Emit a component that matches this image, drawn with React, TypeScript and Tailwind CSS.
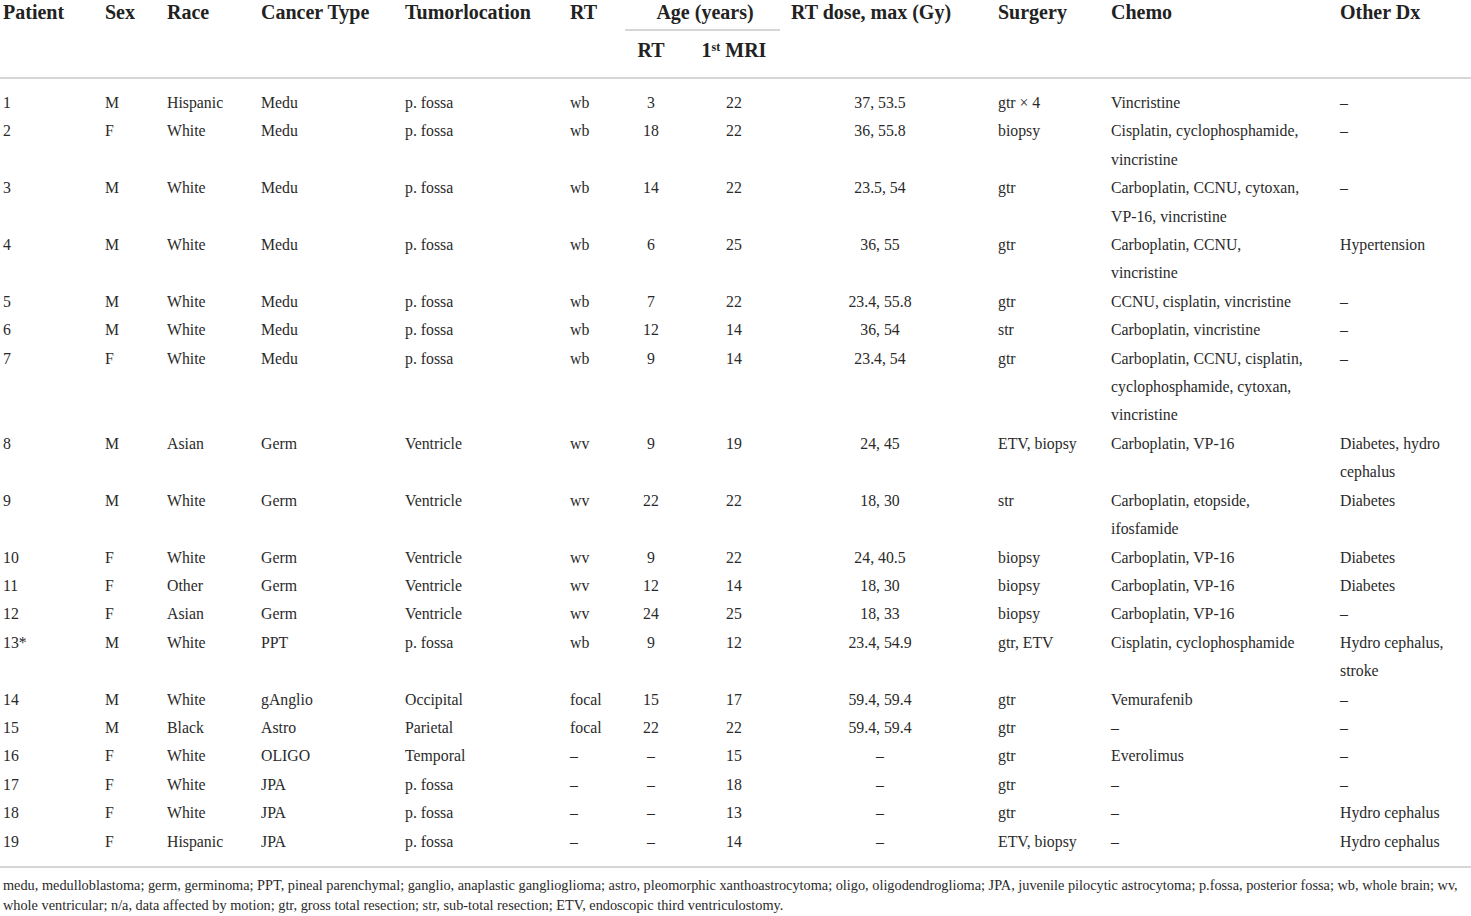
import React from "react";

type Row = {
  p: string; sex: string; race: string; cancer: string; loc: string; rt: string;
  ageRt: string; mri: string; dose: string; surgery: string; chemo: string[]; other: string[];
};

const rows: Row[] = [
  { p: "1", sex: "M", race: "Hispanic", cancer: "Medu", loc: "p. fossa", rt: "wb", ageRt: "3", mri: "22", dose: "37, 53.5", surgery: "gtr × 4", chemo: ["Vincristine"], other: ["–"] },
  { p: "2", sex: "F", race: "White", cancer: "Medu", loc: "p. fossa", rt: "wb", ageRt: "18", mri: "22", dose: "36, 55.8", surgery: "biopsy", chemo: ["Cisplatin, cyclophosphamide,", "vincristine"], other: ["–"] },
  { p: "3", sex: "M", race: "White", cancer: "Medu", loc: "p. fossa", rt: "wb", ageRt: "14", mri: "22", dose: "23.5, 54", surgery: "gtr", chemo: ["Carboplatin, CCNU, cytoxan,", "VP-16, vincristine"], other: ["–"] },
  { p: "4", sex: "M", race: "White", cancer: "Medu", loc: "p. fossa", rt: "wb", ageRt: "6", mri: "25", dose: "36, 55", surgery: "gtr", chemo: ["Carboplatin, CCNU,", "vincristine"], other: ["Hypertension"] },
  { p: "5", sex: "M", race: "White", cancer: "Medu", loc: "p. fossa", rt: "wb", ageRt: "7", mri: "22", dose: "23.4, 55.8", surgery: "gtr", chemo: ["CCNU, cisplatin, vincristine"], other: ["–"] },
  { p: "6", sex: "M", race: "White", cancer: "Medu", loc: "p. fossa", rt: "wb", ageRt: "12", mri: "14", dose: "36, 54", surgery: "str", chemo: ["Carboplatin, vincristine"], other: ["–"] },
  { p: "7", sex: "F", race: "White", cancer: "Medu", loc: "p. fossa", rt: "wb", ageRt: "9", mri: "14", dose: "23.4, 54", surgery: "gtr", chemo: ["Carboplatin, CCNU, cisplatin,", "cyclophosphamide, cytoxan,", "vincristine"], other: ["–"] },
  { p: "8", sex: "M", race: "Asian", cancer: "Germ", loc: "Ventricle", rt: "wv", ageRt: "9", mri: "19", dose: "24, 45", surgery: "ETV, biopsy", chemo: ["Carboplatin, VP-16"], other: ["Diabetes, hydro", "cephalus"] },
  { p: "9", sex: "M", race: "White", cancer: "Germ", loc: "Ventricle", rt: "wv", ageRt: "22", mri: "22", dose: "18, 30", surgery: "str", chemo: ["Carboplatin, etopside,", "ifosfamide"], other: ["Diabetes"] },
  { p: "10", sex: "F", race: "White", cancer: "Germ", loc: "Ventricle", rt: "wv", ageRt: "9", mri: "22", dose: "24, 40.5", surgery: "biopsy", chemo: ["Carboplatin, VP-16"], other: ["Diabetes"] },
  { p: "11", sex: "F", race: "Other", cancer: "Germ", loc: "Ventricle", rt: "wv", ageRt: "12", mri: "14", dose: "18, 30", surgery: "biopsy", chemo: ["Carboplatin, VP-16"], other: ["Diabetes"] },
  { p: "12", sex: "F", race: "Asian", cancer: "Germ", loc: "Ventricle", rt: "wv", ageRt: "24", mri: "25", dose: "18, 33", surgery: "biopsy", chemo: ["Carboplatin, VP-16"], other: ["–"] },
  { p: "13*", sex: "M", race: "White", cancer: "PPT", loc: "p. fossa", rt: "wb", ageRt: "9", mri: "12", dose: "23.4, 54.9", surgery: "gtr, ETV", chemo: ["Cisplatin, cyclophosphamide"], other: ["Hydro cephalus,", "stroke"] },
  { p: "14", sex: "M", race: "White", cancer: "gAnglio", loc: "Occipital", rt: "focal", ageRt: "15", mri: "17", dose: "59.4, 59.4", surgery: "gtr", chemo: ["Vemurafenib"], other: ["–"] },
  { p: "15", sex: "M", race: "Black", cancer: "Astro", loc: "Parietal", rt: "focal", ageRt: "22", mri: "22", dose: "59.4, 59.4", surgery: "gtr", chemo: ["–"], other: ["–"] },
  { p: "16", sex: "F", race: "White", cancer: "OLIGO", loc: "Temporal", rt: "–", ageRt: "–", mri: "15", dose: "–", surgery: "gtr", chemo: ["Everolimus"], other: ["–"] },
  { p: "17", sex: "F", race: "White", cancer: "JPA", loc: "p. fossa", rt: "–", ageRt: "–", mri: "18", dose: "–", surgery: "gtr", chemo: ["–"], other: ["–"] },
  { p: "18", sex: "F", race: "White", cancer: "JPA", loc: "p. fossa", rt: "–", ageRt: "–", mri: "13", dose: "–", surgery: "gtr", chemo: ["–"], other: ["Hydro cephalus"] },
  { p: "19", sex: "F", race: "Hispanic", cancer: "JPA", loc: "p. fossa", rt: "–", ageRt: "–", mri: "14", dose: "–", surgery: "ETV, biopsy", chemo: ["–"], other: ["Hydro cephalus"] },
];

function Lines({ lines }: { lines: string[] }) {
  return (
    <>
      {lines.map((l, i) => (
        <div key={i} className="whitespace-nowrap">{l}</div>
      ))}
    </>
  );
}

export default function App() {
  const th = "align-top text-left font-bold text-[20px] leading-[24px] text-[#222] border-b-2 border-[#d6d6d6] pl-[3px] whitespace-nowrap";
  return (
    <div className="w-[1471px] h-[916px] bg-white overflow-hidden" style={{ fontFamily: '"Liberation Serif", "Times New Roman", serif' }}>
      <table className="w-[1471px] table-fixed border-collapse">
        <colgroup>
          <col className="w-[102px]" />
          <col className="w-[62px]" />
          <col className="w-[94px]" />
          <col className="w-[144px]" />
          <col className="w-[165px]" />
          <col className="w-[55px]" />
          <col className="w-[58px]" />
          <col className="w-[108px]" />
          <col className="w-[184px]" />
          <col className="w-[136px]" />
          <col className="w-[229px]" />
          <col className="w-[134px]" />
        </colgroup>
        <thead>
          <tr>
            <th rowSpan={2} className={th}>Patient</th>
            <th rowSpan={2} className={th}>Sex</th>
            <th rowSpan={2} className={th}>Race</th>
            <th rowSpan={2} className={th}>Cancer Type</th>
            <th rowSpan={2} className={th}>Tumorlocation</th>
            <th rowSpan={2} className={th}>RT</th>
            <th colSpan={2} className="align-top p-0 font-bold text-[20px] leading-[24px] text-[#222]">
              <div className="text-center">Age (years)</div>
              <div className="ml-[3px] mr-[8px] mt-[5px] border-b-2 border-[#d6d6d6]" />
            </th>
            <th rowSpan={2} className={th + " text-center pl-0"}>RT dose, max (Gy)</th>
            <th rowSpan={2} className={th + " pl-[26px]"}>Surgery</th>
            <th rowSpan={2} className={th}>Chemo</th>
            <th rowSpan={2} className={th}>Other Dx</th>
          </tr>
          <tr>
            <th className="align-top text-center font-bold text-[20px] leading-[24px] text-[#222] border-b-2 border-[#d6d6d6] pt-[7px] pb-[15px]">RT</th>
            <th className="align-top text-center font-bold text-[20px] leading-[24px] text-[#222] border-b-2 border-[#d6d6d6] pt-[7px] pb-[15px] whitespace-nowrap">
              1<sup className="text-[12px] font-bold">st</sup> MRI
            </th>
          </tr>
        </thead>
        <tbody className="text-[15.8px] leading-[28.4px] text-[#2a2a2a]">
          {rows.map((r, i) => {
            const first = i === 0;
            const last = i === rows.length - 1;
            const pad = (first ? "pt-[10px] " : "") + (last ? "pb-[10px] border-b-2 border-[#d6d6d6] " : "");
            const l = "align-top text-left pl-[3px] whitespace-nowrap " + pad;
            const c = "align-top text-center whitespace-nowrap " + pad;
            return (
              <tr key={r.p}>
                <td className={l}>{r.p}</td>
                <td className={l}>{r.sex}</td>
                <td className={l}>{r.race}</td>
                <td className={l}>{r.cancer}</td>
                <td className={l}>{r.loc}</td>
                <td className={l}>{r.rt}</td>
                <td className={c}>{r.ageRt}</td>
                <td className={c}>{r.mri}</td>
                <td className={c}>{r.dose}</td>
                <td className={l + " pl-[26px]"}>{r.surgery}</td>
                <td className={l}><Lines lines={r.chemo} /></td>
                <td className={l}><Lines lines={r.other} /></td>
              </tr>
            );
          })}
        </tbody>
      </table>
      <div className="pl-[3px] pt-[7px] text-[14.3px] leading-[20px] text-[#2a2a2a]">
        <div className="whitespace-nowrap">medu, medulloblastoma; germ, germinoma; PPT, pineal parenchymal; ganglio, anaplastic ganglioglioma; astro, pleomorphic xanthoastrocytoma; oligo, oligodendroglioma; JPA, juvenile pilocytic astrocytoma; p.fossa, posterior fossa; wb, whole brain; wv,</div>
        <div className="whitespace-nowrap">whole ventricular; n/a, data affected by motion; gtr, gross total resection; str, sub-total resection; ETV, endoscopic third ventriculostomy.</div>
      </div>
    </div>
  );
}
